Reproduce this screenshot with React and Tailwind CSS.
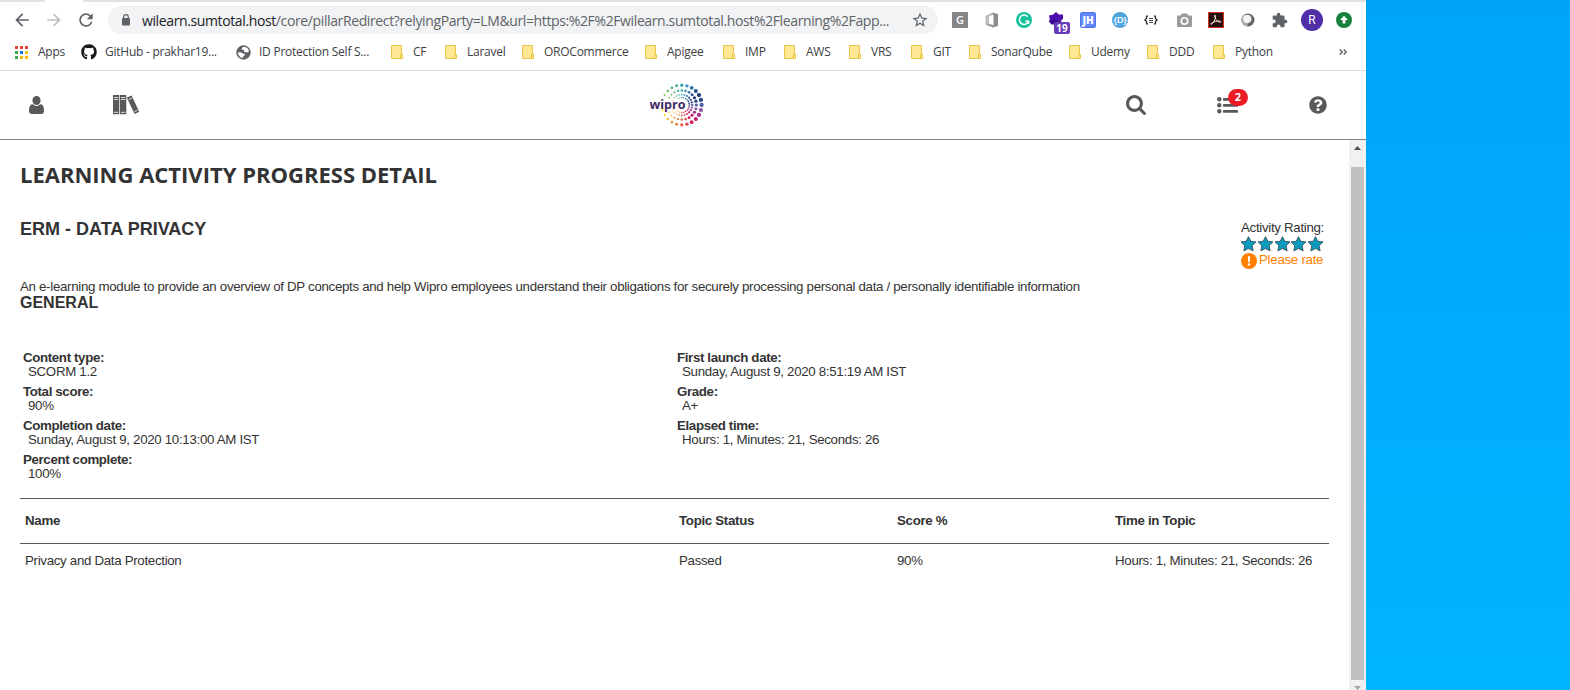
import React from "react";
import { FaGithub, FaQuestionCircle } from "react-icons/fa";
import { MdArrowBack, MdArrowForward, MdRefresh, MdStarBorder } from "react-icons/md";

const bookmarks = [
  ["CF", "w-[54px]"],
  ["Laravel", "w-[77px]"],
  ["OROCommerce", "w-[123px]"],
  ["Apigee", "w-[78px]"],
  ["IMP", "w-[61px]"],
  ["AWS", "w-[65px]"],
  ["VRS", "w-[62px]"],
  ["GIT", "w-[58px]"],
  ["SonarQube", "w-[100px]"],
  ["Udemy", "w-[78px]"],
  ["DDD", "w-[66px]"],
  ["Python", "w-[126px]"],
];

const leftFacts = [
  ["Content type:", "SCORM 1.2"],
  ["Total score:", "90%"],
  ["Completion date:", "Sunday, August 9, 2020 10:13:00 AM IST"],
  ["Percent complete:", "100%"],
];
const rightFacts = [
  ["First launch date:", "Sunday, August 9, 2020 8:51:19 AM IST"],
  ["Grade:", "A+"],
  ["Elapsed time:", "Hours: 1, Minutes: 21, Seconds: 26"],
];

function Folder() {
  return (
    <svg width="12" height="14" viewBox="0 0 12 14" className="shrink-0">
      <path d="M.5.5h10v9h1v4h-11z" fill="#ffe793" stroke="#e8c547" />
      <path d="M9.5 13.5v-4h1.5" fill="none" stroke="#e8c547" />
    </svg>
  );
}

function AppsGrid() {
  const colors = ["#ea4335", "#ea4335", "#ea4335", "#34a853", "#1a73e8", "#fbbc04", "#34a853", "#fbbc04", "#fbbc04"];
  return (
    <svg width="13" height="13" viewBox="0 0 13 13" className="shrink-0">
      {colors.map((c, i) => (
        <rect key={i} x={(i % 3) * 5} y={Math.floor(i / 3) * 5} width="3" height="3" fill={c} />
      ))}
    </svg>
  );
}

function Globe() {
  return (
    <svg width="15" height="15" viewBox="0 0 15 15" className="shrink-0">
      <circle cx="7.5" cy="7.5" r="7.2" fill="#5f6368" />
      <path d="M8 1.800 5.800 3v1.600l2.200.5v1.400l2.200.9 2.300-.4.3-1.200C12.600 3.900 10.500 2 8 1.800zM2 7.200l3.200.2 1.900 1.200 1.700.4v1.300l-1.500 1-.6 1.700C4.300 12.600 2 10.500 2 7.200z" fill="#fff" />
    </svg>
  );
}

function Cell({ children }) {
  return <div className="flex h-8 w-8 shrink-0 items-center justify-center">{children}</div>;
}

function Extensions() {
  return (
    <div className="flex items-center">
      <Cell>
        <div className="flex size-4 items-center justify-center rounded-[1px] bg-[#868686] font-['Open_Sans',sans-serif] text-[11px] font-semibold text-white">G</div>
      </Cell>
      <Cell>
        <svg width="16" height="16" viewBox="0 0 16 16">
          <path d="M1.500 4 8.500.5v2.500L5 4.500v7l-3.500 1.200z" fill="#bcbcbc" />
          <path d="M8.500.500l5.500 1.500v12l-5.500 1.500V13h1V3h-1z" fill="#8d8d8d" />
          <path d="M1.500 12.700l3.500-1.200L9.500 13v2.500h-1z" fill="#a2a2a2" />
        </svg>
      </Cell>
      <Cell>
        <svg width="16" height="16" viewBox="0 0 16 16">
          <circle cx="8" cy="8" r="8" fill="#15c39a" />
          <path d="M11.700 4.700A4.700 4.700 0 1 0 12.500 9.300H9.300M12.500 9.300v2.700" fill="none" stroke="#fff" strokeWidth="1.500" />
        </svg>
      </Cell>
      <Cell>
        <div className="relative size-4">
          <svg width="16" height="16" viewBox="0 0 16 16">
            <path d="M8 0l2.800 2.600H15V7l-2.500 1.500H2L1 3.500 5.200 2.600z" fill="#4b0db0" />
            <path d="M.500 9 3 7.500l11 1-3.500 4H3.500z" fill="#3a0891" />
          </svg>
          <div className="absolute top-[10px] left-[6px] flex h-[12px] w-[16px] items-center justify-center rounded-[2px] bg-[#673ab7] font-['Open_Sans',sans-serif] text-[10px] font-bold text-white">19</div>
        </div>
      </Cell>
      <Cell>
        <div className="flex size-4 items-center justify-center rounded-[2px] border border-[#4c74e8] bg-[#6488fa] font-['Open_Sans',sans-serif] text-[10px] font-extrabold text-white">JH</div>
      </Cell>
      <Cell>
        <div className="flex size-4 items-center justify-center rounded-full bg-[#4ea5e0] font-['Open_Sans',sans-serif] text-[9.5px] font-semibold tracking-[-0.5px] text-white">
          {"{D}"}
        </div>
      </Cell>
      <Cell>
        <svg width="14" height="10" viewBox="0 0 14 10" className="-ml-0.5" fill="none" stroke="#333" strokeWidth="1.400">
          <path d="M4 1H3.500Q2.500 1 2.500 2v1.500L1 5l1.500 1.500V8q0 1 1 1H4M10 1h.5q1 0 1 1v1.500L13 5l-1.500 1.500V8q0 1-1 1H10" />
          <path d="M5 3.500h4M5 5.500h4M5 7.500h4" strokeWidth=".9" />
        </svg>
      </Cell>
      <Cell>
        <svg width="15" height="14" viewBox="0 0 15 14" fill="none">
          <path d="M5 .5h5l1.200 2H14q1 0 1 1V13q0 1-1 1H1q-1 0-1-1V3.500q0-1 1-1h2.800z" fill="#9a9a9a" />
          <circle cx="7.500" cy="8" r="4" fill="#fff" />
          <circle cx="7.500" cy="8" r="2.400" fill="#9a9a9a" />
        </svg>
      </Cell>
      <Cell>
        <svg width="16" height="16" viewBox="0 0 16 16">
          <rect x=".5" y=".5" width="15" height="15" fill="#2a0f0e" stroke="#d3321d" />
          <path d="M3.300 12.300c1.800-.8 3.600-4 4.100-6.300.5-2.400 0-3.200-.5-2.900-.8.700.2 3.900 2.500 6 1.200 1 3.400 1.500 3.500.7.1-.9-2.500-1-5.200-.4-2.500.500-4.700 1.500-4.900 2.400-.1.400.2.600.5.500z" fill="none" stroke="#f1e3e1" strokeWidth="1" />
        </svg>
      </Cell>
      <Cell>
        <svg width="14" height="14" viewBox="0 0 14 14">
          <circle cx="7" cy="7" r="6.500" fill="#666" />
          <path d="M7 13.500A6.500 6.500 0 0 1 .500 7 6.500 6.500 0 0 1 4 1.300z" fill="#aaa" />
          <circle cx="6.300" cy="6" r="4.200" fill="#f5f5f5" />
        </svg>
      </Cell>
      <Cell>
        <svg width="16" height="16" viewBox="1 0 23 23" fill="#5f6368">
          <path d="M20.500 11H19V7c0-1.100-.9-2-2-2h-4V3.500a2.500 2.500 0 0 0-5 0V5H4c-1.100 0-1.990.9-1.990 2v3.800H3.500c1.490 0 2.700 1.210 2.700 2.700s-1.210 2.700-2.700 2.700H2V20c0 1.100.9 2 2 2h3.800v-1.500c0-1.490 1.210-2.700 2.700-2.700s2.700 1.210 2.700 2.700V22H17c1.100 0 2-.9 2-2v-4h1.500a2.500 2.500 0 0 0 0-5z" />
        </svg>
      </Cell>
      <Cell>
        <div className="flex size-[22px] shrink-0 items-center justify-center rounded-full bg-[#512da8] font-[Roboto,sans-serif] text-[12px] text-white">R</div>
      </Cell>
      <Cell>
        <svg width="16" height="16" viewBox="0 0 16 16">
          <circle cx="8" cy="8" r="8" fill="#188038" />
          <path d="M8 3.700 12 8H9.500v3.500h-3V8H4z" fill="#fff" />
        </svg>
      </Cell>
    </div>
  );
}

const ringStops = ["#2aa5a0", "#3b93c4", "#2f6fb0", "#25508f", "#1f3673", "#2a4585", "#5560a5", "#8f5aa3", "#a8308c", "#c0186e", "#d51e62", "#de4a52", "#e2523f", "#ea7a35", "#f09a3a", "#f6b436", "#f9cf30", "#f2de35", "#d9df45", "#b9d54c", "#8fc95a", "#66bb62", "#48b07a", "#33a98f"];
const rings = [
  [19.8, 1.6],
  [14.600, 1.2],
  [10.400, 0.850],
  [7.500, 0.650],
];

function Logo() {
  return (
    <svg width="56" height="46" viewBox="0 0 56 46">
      {rings.map(([r, s]) =>
        ringStops.map((c, i) => {
          const a = (i * Math.PI) / 12;
          const x = 31.800 + r * Math.sin(a);
          const y = 23 - r * Math.cos(a);
          if (x < 37 && y > 17.500 && y < 28) return null;
          return <circle key={`${r}-${i}`} cx={x} cy={y} r={s * (1 + 0.35 * Math.sin(a))} fill={c} />;
        })
      )}
      <text x="-.5" y="26.500" fontFamily="Open Sans, sans-serif" fontSize="13" fontWeight="700" textLength="36" lengthAdjust="spacingAndGlyphs" fill="#3f2a63">
        wipro
      </text>
    </svg>
  );
}

function Books() {
  return (
    <svg width="27" height="20" viewBox="0 0 27 20" className="shrink-0">
      <path d="M0 0h6.300v19.300H0zM7 0h6.300v19.300H7zM13.800 2.600 18.600.4l7.600 16.400-4.600 2.300z" fill="#58595b" />
      <path d="M1 2.500h4.300M1 4.500h4.300M1 17.300h4.300M8 2.500h4.300M8 4.500h4.300M8 17.300h4.300M15.700 4.600l3.600-1.700M21.300 16.800l3.400-1.700" stroke="#fff" strokeWidth=".8" />
    </svg>
  );
}

function Star() {
  return (
    <svg width="16.800" height="16" viewBox="0 0 16.8 16" className="shrink-0">
      <path d="M7.500.7 9.800 5.300l5.200.6-3.800 3.700.9 5.300-4.600-2.500-4.600 2.500.9-5.300L0 5.900l5.200-.6z" fill="#0d9bbd" stroke="#36505c" strokeWidth=".9" />
    </svg>
  );
}

function Facts({ items }) {
  return (
    <dl className="w-[654px]">
      {items.map(([label, value]) => (
        <div key={label} className="mb-[6px] leading-[14px]">
          <dt className="font-bold tracking-[-0.36px]">{label}</dt>
          <dd className="ml-[5px]">{value}</dd>
        </div>
      ))}
    </dl>
  );
}

export default function App() {
  return (
    <div className="flex h-[690px] w-[1570px] overflow-hidden bg-linear-to-b from-[#00a3fa] to-[#00b5ff]">
      <div className="flex w-[1366px] shrink-0 flex-col bg-white">
        <div className="flex h-[2px] shrink-0 bg-[#dee1e6]">
          <div className="ml-[45px] w-[38px] bg-white" />
        </div>
        <div className="flex h-[36px] shrink-0 items-center text-[#5f6368]">
          <div className="flex w-[108px] items-center gap-3 pl-3">
            <MdArrowBack size={20} />
            <MdArrowForward size={20} color="#bdbfc1" />
            <MdRefresh size={20} />
          </div>
          <div className="flex h-7 w-[830px] items-center rounded-full bg-[#f1f3f4] pl-[14px]">
            <svg width="8" height="12" viewBox="0 0 8 12" className="shrink-0">
              <rect y="4" width="8" height="7.500" rx=".8" fill="#5f6368" />
              <path d="M1.700 4.500V3a2.300 2.300 0 0 1 4.600 0v1.500" fill="none" stroke="#5f6368" strokeWidth="1.200" />
            </svg>
            <div className="ml-[12px] w-[757px] font-['Open_Sans',sans-serif] text-[14px] tracking-[-0.38px] whitespace-nowrap">
              <span className="text-[#202124]">wilearn.sumtotal.host</span>
              /core/pillarRedirect?relyingParty=LM&amp;url=https:%2F%2Fwilearn.sumtotal.host%2Flearning%2Fapp...
            </div>
            <MdStarBorder size={18} className="ml-[12px] shrink-0" />
          </div>
          <div className="ml-[6px]">
            <Extensions />
          </div>
        </div>
        <div className="flex h-[33px] shrink-0 items-center border-b border-[#dadce0] pb-[4px] pl-[15px] font-['Open_Sans',sans-serif] text-[12px] tracking-[-0.25px] whitespace-nowrap text-[#3c4043]">
          <div className="flex w-[66px] items-center gap-[10px]">
            <AppsGrid />
            Apps
          </div>
          <div className="flex w-[155px] items-center gap-2">
            <FaGithub size={16} color="#191717" />
            GitHub - prakhar19...
          </div>
          <div className="flex w-[155px] items-center gap-2">
            <Globe />
            ID Protection Self S...
          </div>
          {bookmarks.map(([name, width]) => (
            <div key={name} className={`flex shrink-0 items-center gap-[10px] ${width}`}>
              <Folder />
              {name}
            </div>
          ))}
          <svg width="9" height="6" viewBox="0 0 9 6" fill="none" stroke="#5f6368" strokeWidth="1.400">
            <path d="M.7.5l2.500 2.500L.7 5.500M4.700.5l2.500 2.500-2.500 2.500" />
          </svg>
        </div>

        <header className="flex h-[69px] shrink-0 items-center border-b border-[#808080] text-[#58595b]">
          <div className="flex w-[650px] items-center pl-[29px]">
            <svg width="15" height="18" viewBox="0 128 1408 1536" preserveAspectRatio="none" fill="currentColor">
              <path d="M1408 1405q0 120-73 189.5t-194 69.5h-874q-121 0-194-69.5t-73-189.5q0-53 3.5-103.5t14-109 26.5-108.5 43-97.5 62-81 85.5-53.5 111.5-20q9 0 42 21.5t74.500 48 108 48 133.5 21.5 133.5-21.5 108-48 74.5-48 42-21.5q61 0 111.5 20t85.5 53.500 62 81 43 97.5 26.5 108.5 14 109 3.5 103.5zm-320-893q0 159-112.5 271.5t-271.5 112.5-271.5-112.5-112.5-271.5 112.5-271.5 271.5-112.5 271.5 112.5 112.5 271.5z" />
            </svg>
            <div className="ml-[69px]">
              <Books />
            </div>
          </div>
          <Logo />
          <div className="ml-[420px] flex items-center">
            <svg width="20" height="20" viewBox="64 128 1664 1664" fill="currentColor">
              <path d="M1216 832q0-185-131.5-316.5t-316.5-131.5-316.5 131.5-131.5 316.5 131.5 316.5 316.5 131.5 316.5-131.5 131.5-316.5zm512 832q0 52-38 90t-90 38q-54 0-90-38l-343-342q-179 124-399 124-143 0-273.5-55.5t-225-150-150-225-55.5-273.5 55.5-273.5 150-225 225-150 273.5-55.5 273.5 55.5 225 150 150 225 55.5 273.5q0 220-124 399l343 343q37 37 37 90z" />
            </svg>
            <div className="relative ml-[71px] w-[21px]">
              <svg width="21" height="17" viewBox="0 0 21 17" fill="currentColor">
                {[2.300, 8.300, 14.300].map((y) => (
                  <g key={y}>
                    <circle cx="2.300" cy={y} r="2.200" />
                    <rect x="6" y={y - 1.300} width="15" height="2.700" rx=".4" />
                  </g>
                ))}
              </svg>
              <div className="absolute top-[-8px] left-[11px] flex h-[17px] w-[20px] items-center justify-center rounded-full bg-[#ed1c24] font-['Open_Sans',sans-serif] text-[11px] font-bold text-white">2</div>
            </div>
            <FaQuestionCircle size={18} className="ml-[71px]" />
          </div>
        </header>

        <div className="flex min-h-0 flex-1">
          <main className="w-[1349px] pl-[20px] font-['Liberation_Sans',sans-serif] text-[13.3px] tracking-[-0.31px] text-[#333]">
            <h1 className="mt-[19px] h-[31px] font-['Open_Sans',sans-serif] text-[22px] leading-[30px] font-bold tracking-normal whitespace-nowrap">LEARNING ACTIVITY PROGRESS DETAIL</h1>
            <div className="mt-[28px] flex h-[61px] justify-between pr-[24px]">
              <h2 className="mt-px text-[18px] leading-[20px] font-bold tracking-normal">ERM - DATA PRIVACY</h2>
              <div className="w-[84px] whitespace-nowrap">
                <div className="mt-[2px] leading-[16px]">Activity Rating:</div>
                <div className="flex h-[16px]">
                  {[0, 1, 2, 3, 4].map((i) => (
                    <Star key={i} />
                  ))}
                </div>
                <div className="flex gap-[2px] leading-[15px] tracking-[-0.28px] text-[#ff7f00]">
                  <svg width="16" height="16" viewBox="0 0 16 16" className="mt-px shrink-0">
                    <circle cx="8" cy="8" r="8" fill="#ff7f00" />
                    <path d="M6.800 3.300h2.400L8.800 9H7.200zM6.900 10.300h2.200v2.200H6.900z" fill="#fff" />
                  </svg>
                  Please rate
                </div>
              </div>
            </div>
            <p className="leading-[16px] whitespace-nowrap">
              An e-learning module to provide an overview of DP concepts and help Wipro employees understand their obligations for securely processing personal data / personally identifiable information
            </p>
            <h3 className="text-[16px] leading-[16px] font-bold tracking-normal">GENERAL</h3>
            <div className="mt-[40px] flex h-[147px] pl-[3px]">
              <Facts items={leftFacts} />
              <Facts items={rightFacts} />
            </div>
            <div className="grid h-[46px] w-[1309px] grid-cols-[654px_218px_218px_1fr] items-center border-y border-[#58595b] pl-[5px] font-bold">
              <div>Name</div>
              <div>Topic Status</div>
              <div>Score %</div>
              <div>Time in Topic</div>
            </div>
            <div className="grid h-[34px] w-[1309px] grid-cols-[654px_218px_218px_1fr] items-center pl-[5px] whitespace-nowrap">
              <div>Privacy and Data Protection</div>
              <div>Passed</div>
              <div>90%</div>
              <div>Hours: 1, Minutes: 21, Seconds: 26</div>
            </div>
          </main>
          <div className="flex w-[17px] flex-col items-center bg-[#f1f1f1]">
            <svg width="7" height="4" viewBox="0 0 7 4" className="mt-[6px] shrink-0">
              <path d="M3.500 0 7 4H0z" fill="#505050" />
            </svg>
            <div className="mt-[17px] h-[513px] w-[13px] shrink-0 bg-[#c1c1c1]" />
            <svg width="7" height="4" viewBox="0 0 7 4" className="mt-[6px] shrink-0">
              <path d="M0 0h7L3.500 4z" fill="#a3a3a3" />
            </svg>
          </div>
        </div>
      </div>
    </div>
  );
}
